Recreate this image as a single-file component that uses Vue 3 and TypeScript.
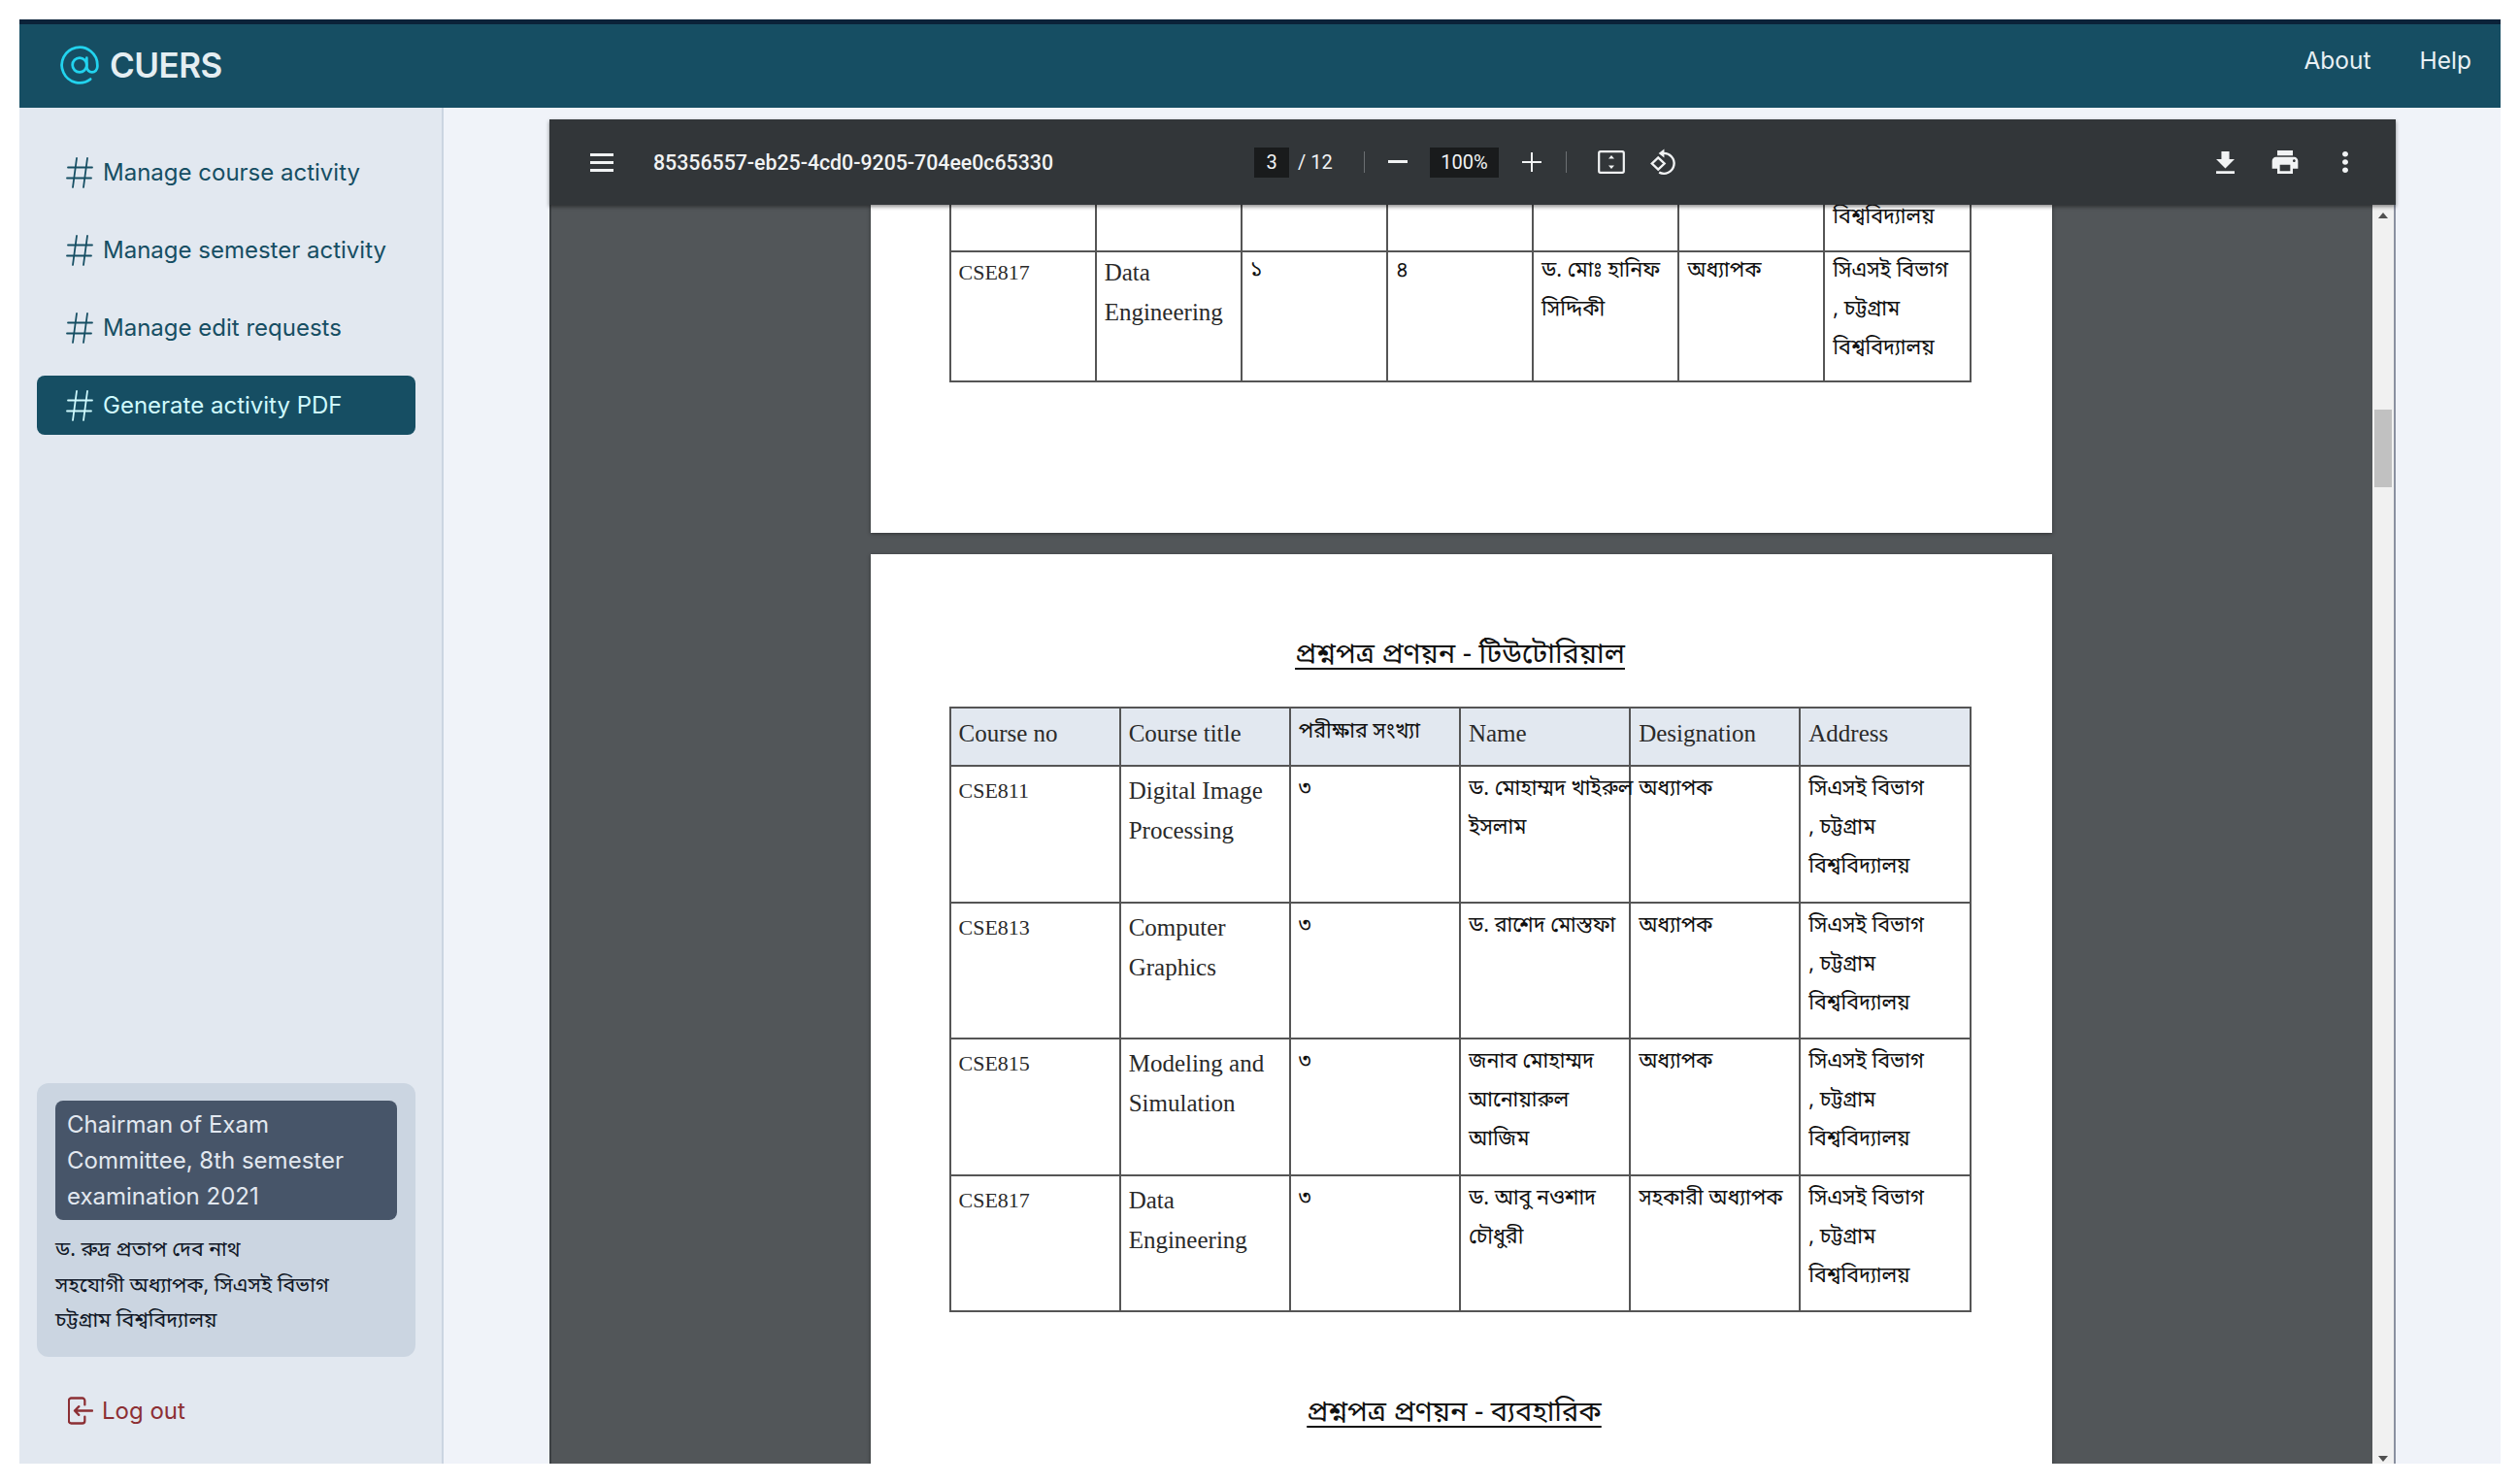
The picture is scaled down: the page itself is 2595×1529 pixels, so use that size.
<template>
  <div class="app">
    <header class="topbar">
      <div class="brand">
        <svg class="brand-icon" viewBox="0 0 24 24" fill="none" stroke="currentColor" stroke-width="1.5" stroke-linecap="round" stroke-linejoin="round">
          <circle cx="12" cy="12" r="4" />
          <path d="M16 8v5a3 3 0 0 0 6 0v-1a10 10 0 1 0-3.92 7.94" />
        </svg>
        <span class="brand-name">CUERS</span>
      </div>
      <nav class="top-links">
        <a>About</a>
        <a>Help</a>
      </nav>
    </header>

    <div class="body">
      <aside class="sidebar">
        <ul class="menu">
          <li v-for="item in menu" :key="item" class="menu-item" :class="{ active: item === activeItem }">
            <svg class="hash" viewBox="0 0 28 32" fill="none" stroke="currentColor" stroke-width="1.8" stroke-linecap="round">
              <path d="M11 1 7 31M22 1l-4 30M2 10.5h25M1 21.5h25" />
            </svg>
            <span>{{ item }}</span>
          </li>
        </ul>

        <div class="spacer"></div>

        <div class="profile">
          <div class="role">Chairman of Exam Committee, 8th semester examination 2021</div>
          <div class="person">
            <div v-for="line in person" :key="line">{{ line }}</div>
          </div>
        </div>

        <div class="logout">
          <svg class="logout-icon" viewBox="0 0 30 32" fill="none" stroke="currentColor" stroke-width="2.6" stroke-linecap="round" stroke-linejoin="round">
            <path d="M20 9V4a3 3 0 0 0-3-3H4a3 3 0 0 0-3 3v24a3 3 0 0 0 3 3h13a3 3 0 0 0 3-3v-5" />
            <path d="M29 16H8M13 11l-5 5 5 5" />
          </svg>
          <span>Log out</span>
        </div>
      </aside>

      <main class="main">
        <section class="viewer">
          <div class="toolbar">
            <div class="tb-left">
              <svg class="tb-menu" viewBox="0 0 24 19" fill="currentColor"><path d="M0 0h24v3H0zM0 8h24v3H0zM0 16h24v3H0z" /></svg>
              <span class="filename">85356557-eb25-4cd0-9205-704ee0c65330</span>
            </div>
            <div class="tb-center">
              <span class="num-box page-box">3</span>
              <span class="page-count">/ 12</span>
              <span class="tb-sep sep-a"></span>
              <svg class="tb-minus" viewBox="0 0 20 4" fill="currentColor"><path d="M0 0h20v3H0z" /></svg>
              <span class="num-box zoom-box">100%</span>
              <svg class="tb-plus" viewBox="0 0 20 20" fill="currentColor"><path d="M9 0h2v9h9v2h-9v9H9v-9H0V9h9z" /></svg>
              <span class="tb-sep sep-b"></span>
              <svg class="tb-fit" viewBox="0 0 28 24" fill="none" stroke="currentColor" stroke-width="2.2">
                <rect x="1.2" y="1.2" width="25.6" height="21.6" rx="1.5" />
                <path d="m14 5 3 3.6h-6zM14 19l3-3.6h-6z" fill="currentColor" stroke="none" />
              </svg>
              <svg class="tb-rotate" viewBox="0 0 28 28" fill="none" stroke="currentColor" stroke-width="2.2">
                <path d="M13 5.5a9.8 9.8 0 1 1 -3.5 18.4" />
                <path d="M14.4 1.4v8.4L9 5.6z" fill="currentColor" stroke="none" />
                <path d="m8.6 9.6 6 5.8-6 5.8-6-5.8z" />
              </svg>
            </div>
            <div class="tb-right">
              <svg class="tb-icon" viewBox="5 3 14 17" fill="currentColor"><path d="M19 9h-4V3H9v6H5l7 7 7-7zM5 18v2h14v-2H5z" /></svg>
              <svg class="tb-icon tb-print" viewBox="2 3 20 18" fill="currentColor"><path d="M19 8H5c-1.66 0-3 1.34-3 3v6h4v4h12v-4h4v-6c0-1.66-1.34-3-3-3zm-3 11H8v-5h8v5zm3-7c-.55 0-1-.45-1-1s.45-1 1-1 1 .45 1 1-.45 1-1 1zm-1-9H6v4h12V3z" /></svg>
              <svg class="tb-icon tb-more" viewBox="10 4 4 16" preserveAspectRatio="none" fill="currentColor"><path d="M12 8c1.1 0 2-.9 2-2s-.9-2-2-2-2 .9-2 2 .9 2 2 2zm0 2c-1.1 0-2 .9-2 2s.9 2 2 2 2-.9 2-2-.9-2-2-2zm0 6c-1.1 0-2 .9-2 2s.9 2 2 2 2-.9 2-2-.9-2-2-2z" /></svg>
            </div>
          </div>

          <div class="viewer-body">
            <div class="pages">
              <div class="page page-first">
                <table class="doc-table table-first">
                  <tbody>
                    <tr class="cut-row">
                      <td></td><td></td><td></td><td></td><td></td><td></td>
                      <td><div class="bn">বিশ্ববিদ্যালয়</div></td>
                    </tr>
                    <tr class="full-row">
                      <td v-for="(cell, i) in firstRow" :key="i">
                        <div v-for="line in cell" :key="line" :class="lineClass(line)">{{ line }}</div>
                      </td>
                    </tr>
                  </tbody>
                </table>
              </div>

              <div class="page page-second">
                <h3 class="doc-title">প্রশ্নপত্র প্রণয়ন - টিউটোরিয়াল</h3>
                <table class="doc-table table-second">
                  <thead>
                    <tr>
                      <th v-for="h in headers" :key="h" :class="lineClass(h)">{{ h }}</th>
                    </tr>
                  </thead>
                  <tbody>
                    <tr v-for="row in tutorialRows" :key="row[0][0]">
                      <td v-for="(cell, i) in row" :key="i">
                        <div v-for="line in cell" :key="line" :class="lineClass(line)">{{ line }}</div>
                      </td>
                    </tr>
                  </tbody>
                </table>
                <h3 class="doc-title title-two">প্রশ্নপত্র প্রণয়ন - ব্যবহারিক</h3>
                <div class="next-table"></div>
              </div>
            </div>

            <div class="scrollbar">
              <span class="arrow up"></span>
              <span class="thumb"></span>
              <span class="arrow down"></span>
            </div>
          </div>
        </section>
      </main>
    </div>
  </div>
</template>

<script setup lang="ts">
const menu: string[] = [
  'Manage course activity',
  'Manage semester activity',
  'Manage edit requests',
  'Generate activity PDF'
]
const activeItem = 'Generate activity PDF'

const person: string[] = [
  'ড. রুদ্র প্রতাপ দেব নাথ',
  'সহযোগী অধ্যাপক, সিএসই বিভাগ',
  'চট্টগ্রাম বিশ্ববিদ্যালয়'
]

const address: string[] = ['সিএসই বিভাগ', ', চট্টগ্রাম', 'বিশ্ববিদ্যালয়']

const firstRow: string[][] = [
  ['CSE817'],
  ['Data', 'Engineering'],
  ['১'],
  ['৪'],
  ['ড. মোঃ হানিফ', 'সিদ্দিকী'],
  ['অধ্যাপক'],
  address
]

const headers: string[] = ['Course no', 'Course title', 'পরীক্ষার সংখ্যা', 'Name', 'Designation', 'Address']

const tutorialRows: string[][][] = [
  [['CSE811'], ['Digital Image', 'Processing'], ['৩'], ['ড. মোহাম্মদ খাইরুল', 'ইসলাম'], ['অধ্যাপক'], address],
  [['CSE813'], ['Computer', 'Graphics'], ['৩'], ['ড. রাশেদ মোস্তফা'], ['অধ্যাপক'], address],
  [['CSE815'], ['Modeling and', 'Simulation'], ['৩'], ['জনাব মোহাম্মদ', 'আনোয়ারুল', 'আজিম'], ['অধ্যাপক'], address],
  [['CSE817'], ['Data', 'Engineering'], ['৩'], ['ড. আবু নওশাদ', 'চৌধুরী'], ['সহকারী অধ্যাপক'], address]
]

const lineClass = (text: string) => ({
  bn: /[\u0980-\u09ff]/.test(text),
  code: text.startsWith('CSE')
})
</script>

<style>
html,
body {
  margin: 0;
  background: #fff;
}
</style>

<style scoped>
.app {
  box-sizing: border-box;
  width: 2595px;
  height: 1529px;
  padding: 20px 19px 21px 20px;
  display: flex;
  flex-direction: column;
  overflow: hidden;
  font-family: Inter, "Noto Sans", sans-serif;
}

.topbar {
  box-sizing: border-box;
  height: 91px;
  flex: none;
  display: flex;
  justify-content: space-between;
  align-items: center;
  padding: 0 30px 0 40px;
  background: #164e63;
  border-top: 5px solid #0b2239;
  color: #e8f0f4;
}

.brand {
  display: flex;
  align-items: center;
  gap: 9px;
  margin-top: -2px;
}

.brand-icon {
  width: 44px;
  height: 44px;
  color: #22d3ee;
}

.brand-name {
  font-size: 35px;
  font-weight: 600;
  letter-spacing: -0.5px;
  color: #e5eef2;
}

.top-links {
  display: flex;
  gap: 50px;
  font-size: 24.5px;
  margin-top: -12px;
}

.body {
  flex: 1;
  min-height: 0;
  display: flex;
}

.sidebar {
  box-sizing: border-box;
  width: 437px;
  flex: none;
  display: flex;
  flex-direction: column;
  padding: 0 27px 0 18px;
  background: #e2e8f0;
  border-right: 2px solid #cbd5e1;
}

.menu {
  list-style: none;
  margin: 36px 0 0;
  padding: 0;
  display: flex;
  flex-direction: column;
  gap: 19px;
}

.menu-item {
  height: 61px;
  display: flex;
  align-items: center;
  gap: 10px;
  padding-left: 30px;
  border-radius: 8px;
  font-size: 24px;
  color: #164e63;
}

.menu-item.active {
  background: #164e63;
  color: #cffafe;
}

.hash {
  width: 28px;
  height: 32px;
  flex: none;
}

.spacer {
  flex: 1;
}

.profile {
  box-sizing: border-box;
  height: 282px;
  padding: 18px 19px 0;
  border-radius: 12px;
  background: #cbd5e1;
}

.role {
  box-sizing: border-box;
  height: 123px;
  padding: 6px 12px;
  border-radius: 8px;
  background: #475569;
  color: #e2e8f0;
  font-size: 24px;
  line-height: 37px;
}

.person {
  margin-top: 14px;
  color: #111827;
  font-family: "Noto Sans Bengali", "Liberation Serif", serif;
  font-size: 21.4px;
  line-height: 36.5px;
}

.logout {
  height: 110px;
  display: flex;
  align-items: flex-start;
  gap: 9px;
  padding: 40px 0 0 32px;
  box-sizing: border-box;
  color: #8c2f34;
  font-size: 24px;
  line-height: 31px;
}

.logout-icon {
  width: 26px;
  height: 31px;
  flex: none;
}

.main {
  flex: 1;
  min-width: 0;
  display: flex;
  padding: 12px 108px 0 109px;
  background: #f0f3f9;
}

.viewer {
  flex: 1;
  min-width: 0;
  display: flex;
  flex-direction: column;
  background: #525659;
}

.toolbar {
  position: relative;
  z-index: 2;
  height: 88px;
  flex: none;
  display: flex;
  align-items: center;
  background: #323639;
  color: #f1f3f4;
  box-shadow: 0 2px 4px rgba(0, 0, 0, 0.45);
  font-family: Roboto, "Liberation Sans", sans-serif;
}

.tb-left {
  width: 726px;
  flex: none;
  display: flex;
  align-items: center;
  box-sizing: border-box;
  padding-left: 42px;
}

.tb-menu {
  width: 24px;
  height: 19px;
  flex: none;
}

.filename {
  margin-left: 41px;
  font-size: 21.3px;
  font-weight: 500;
}

.tb-center {
  display: flex;
  align-items: center;
  font-size: 20px;
}

.num-box {
  height: 31px;
  display: flex;
  align-items: center;
  justify-content: center;
  background: #191b1c;
}

.page-box {
  width: 36px;
}

.page-count {
  margin-left: 9px;
  width: 38px;
}

.tb-sep {
  width: 1px;
  height: 22px;
  background: #6b6f72;
}

.sep-a {
  margin-left: 30px;
}

.tb-minus {
  width: 20px;
  height: 4px;
  margin-left: 24px;
}

.zoom-box {
  width: 71px;
  margin-left: 23px;
}

.tb-plus {
  width: 20px;
  height: 20px;
  margin-left: 24px;
}

.sep-b {
  margin-left: 25px;
}

.tb-fit {
  width: 28px;
  height: 24px;
  margin-left: 32px;
}

.tb-rotate {
  width: 30px;
  height: 30px;
  margin-left: 25px;
}

.tb-right {
  margin-left: auto;
  display: flex;
  align-items: center;
  padding-right: 49px;
}

.tb-icon {
  width: 19px;
  height: 23px;
}

.tb-print {
  width: 28px;
  height: 24px;
  margin-left: 38px;
}

.tb-more {
  width: 6px;
  height: 22px;
  margin-left: 45px;
}

.viewer-body {
  flex: 1;
  min-height: 0;
  display: flex;
  overflow: hidden;
  border-left: 2px solid #3c4043;
  border-right: 2px solid #8a90a0;
}

.pages {
  flex: 1;
  min-width: 0;
  overflow: hidden;
  display: flex;
  flex-direction: column;
  align-items: center;
  gap: 22px;
  padding-right: 2px;
}

.page {
  box-sizing: border-box;
  width: 1217px;
  flex: none;
  background: #fff;
  padding-left: 81px;
  box-shadow: 0 1px 4px rgba(0, 0, 0, 0.4);
}

.page-first {
  height: 338px;
}

.page-second {
  padding-top: 81px;
}

.doc-title {
  width: 1053px;
  margin: 0;
  text-align: center;
  font-family: "Noto Sans Bengali", "Liberation Serif", serif;
  font-size: 29px;
  font-weight: 400;
  line-height: 48px;
  color: #111;
  text-decoration: underline;
  text-decoration-thickness: 2px;
  text-underline-offset: 5px;
}

.title-two {
  margin-top: 81px;
  width: 1041px;
}

.doc-table {
  border-collapse: collapse;
  table-layout: fixed;
  width: 1053px;
  font-family: "Liberation Serif", "Noto Serif", serif;
  font-size: 25px;
  line-height: 41px;
  color: #2a2a2a;
}

.doc-table th,
.doc-table td {
  box-sizing: border-box;
  border: 2px solid #555;
  padding: 0 8px;
  vertical-align: top;
  text-align: left;
  font-weight: 400;
  overflow: visible;
  white-space: nowrap;
}

.doc-table th {
  height: 60px;
  padding-top: 5px;
  background: #e2e8f0;
}

.doc-table td {
  padding-top: 4px;
}

.table-first .cut-row {
  height: 48px;
}

.table-first .cut-row td {
  border-top: none;
  padding-top: 0;
}

.table-first .cut-row .bn {
  line-height: 28px;
}

.table-first .full-row {
  height: 134px;
}

.table-first .full-row td {
  padding-top: 0;
}

.table-second {
  margin-top: 28px;
}

.table-second tbody tr {
  height: 140.5px;
}

.bn {
  font-family: "Noto Sans Bengali", "Liberation Serif", serif;
  font-size: 21.5px;
  line-height: 40px;
  color: #111;
}

.code {
  font-size: 22px;
}

.next-table {
  width: 1053px;
  margin-top: 27px;
  border-top: 2px solid #555;
  height: 100px;
}

.scrollbar {
  width: 22px;
  flex: none;
  display: flex;
  flex-direction: column;
  align-items: center;
  background: #f1f1f1;
}

.arrow {
  width: 0;
  height: 0;
  border-left: 5px solid transparent;
  border-right: 5px solid transparent;
}

.arrow.up {
  margin-top: 8px;
  border-bottom: 6px solid #505050;
}

.arrow.down {
  margin-top: auto;
  margin-bottom: 2px;
  border-top: 6px solid #505050;
}

.thumb {
  width: 18px;
  height: 80px;
  margin-top: 197px;
  background: #c1c1c1;
}
</style>
